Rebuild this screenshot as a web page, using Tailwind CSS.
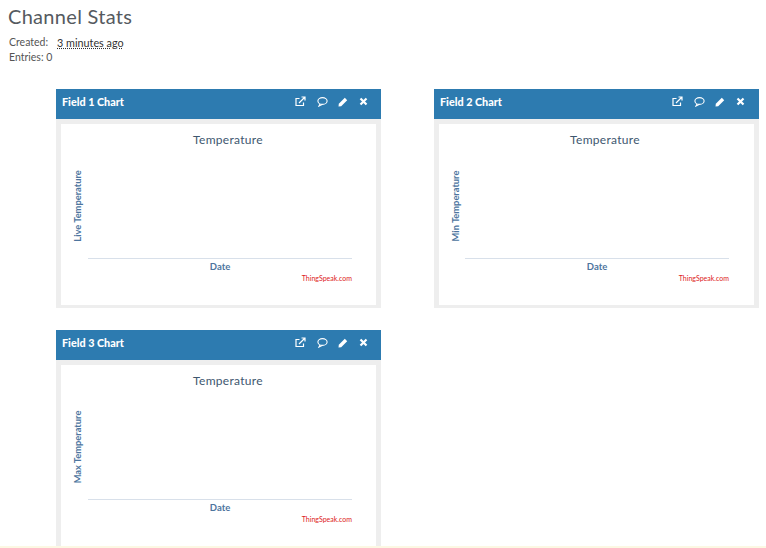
<!DOCTYPE html>
<html lang="en">
<head>
    <meta charset="UTF-8">
    <meta name="viewport" content="width=device-width, initial-scale=1.0">
    <title>Channel Stats</title>
    <script src="https://cdn.jsdelivr.net/npm/@tailwindcss/browser@4"></script>
</head>
<body class="bg-white h-[548px] overflow-hidden relative font-['Lato',sans-serif] text-[#555]">
    <h1 class="pl-[8px] pt-[4px] text-[20px] leading-[24px] tracking-[0.3px] text-[#555a60] font-normal">Channel Stats</h1>

    <div class="pl-[9px] mt-[7px] text-[10.5px] leading-[15px]">
        <div class="flex"><span class="w-[48px]">Created:</span><span class="text-[10.8px] text-[#333] underline decoration-dotted">3 minutes ago</span></div>
        <div>Entries: 0</div>
    </div>

    <div class="grid grid-cols-[325px_325px] gap-x-[53px] gap-y-[22px] ml-[56px] mt-[24px]">

        <!-- Field 1 -->
        <div class="h-[219px] bg-[#eeeeee] flex flex-col">
            <div class="h-[30px] bg-[#2d7bb0] flex items-start justify-between pl-[6px] pr-[13px] pt-[6px] shrink-0">
                <span class="text-white text-[10.8px] leading-[13px] font-black">Field 1 Chart</span>
                <div class="flex items-center gap-[11px] text-white mt-[1px]">
                    <svg width="11" height="11" viewBox="0 0 11 11" fill="none" stroke="currentColor" stroke-width="1.2"><path d="M8.5 6.5V9.5H1V2.5H4.5"/><path d="M4 7L9.5 1.5M6.5 1H10V4.5"/></svg>
                    <svg width="11" height="11" viewBox="0 0 11 11" fill="none" stroke="currentColor" stroke-width="1.1"><ellipse cx="5.5" cy="5" rx="4.6" ry="3.4"/><path d="M3 8L2 10L5 8.4"/></svg>
                    <svg class="ml-[-1px]" width="10" height="10" viewBox="0 0 10 10" fill="currentColor"><path d="M0.5 9.5L0.8 6.8L6.8 0.8L9.2 3.2L3.2 9.2Z"/></svg>
                    <svg width="9" height="9" viewBox="0 0 9 9" stroke="currentColor" stroke-width="2.2"><path d="M1.5 1.5L7.5 7.5M7.5 1.5L1.5 7.5"/></svg>
                </div>
            </div>
            <div class="flex-1 bg-white mx-[5px] mt-[5px] mb-[3px]">
                <svg width="315" height="181" viewBox="0 0 315 181" class="block">
                    <text x="167" y="20" text-anchor="middle" font-size="12" fill="#3e576f" letter-spacing="0.3">Temperature</text>
                    <text x="0" y="0" transform="translate(20 82) rotate(-90)" text-anchor="middle" font-size="9.3" font-weight="700" fill="#4d759e">Live Temperature</text>
                    <line x1="27" y1="134.5" x2="291" y2="134.5" stroke="#d8e0ea"/>
                    <text x="159" y="146" text-anchor="middle" font-size="9.5" font-weight="700" fill="#4d759e">Date</text>
                    <text x="291" y="157" text-anchor="end" font-size="7" fill="#dd2222">ThingSpeak.com</text>
                </svg>
            </div>
        </div>

        <!-- Field 2 -->
        <div class="h-[219px] bg-[#eeeeee] flex flex-col">
            <div class="h-[30px] bg-[#2d7bb0] flex items-start justify-between pl-[6px] pr-[14px] pt-[6px] shrink-0">
                <span class="text-white text-[10.8px] leading-[13px] font-black">Field 2 Chart</span>
                <div class="flex items-center gap-[11px] text-white mt-[1px]">
                    <svg width="11" height="11" viewBox="0 0 11 11" fill="none" stroke="currentColor" stroke-width="1.2"><path d="M8.5 6.5V9.5H1V2.5H4.5"/><path d="M4 7L9.5 1.5M6.5 1H10V4.5"/></svg>
                    <svg width="11" height="11" viewBox="0 0 11 11" fill="none" stroke="currentColor" stroke-width="1.1"><ellipse cx="5.5" cy="5" rx="4.6" ry="3.4"/><path d="M3 8L2 10L5 8.4"/></svg>
                    <svg class="ml-[-1px]" width="10" height="10" viewBox="0 0 10 10" fill="currentColor"><path d="M0.5 9.5L0.8 6.8L6.8 0.8L9.2 3.2L3.2 9.2Z"/></svg>
                    <svg width="9" height="9" viewBox="0 0 9 9" stroke="currentColor" stroke-width="2.2"><path d="M1.5 1.5L7.5 7.5M7.5 1.5L1.5 7.5"/></svg>
                </div>
            </div>
            <div class="flex-1 bg-white mx-[5px] mt-[5px] mb-[3px]">
                <svg width="315" height="181" viewBox="0 0 315 181" class="block">
                    <text x="166" y="20" text-anchor="middle" font-size="12" fill="#3e576f" letter-spacing="0.3">Temperature</text>
                    <text x="0" y="0" transform="translate(20 82) rotate(-90)" text-anchor="middle" font-size="9.3" font-weight="700" fill="#4d759e">Min Temperature</text>
                    <line x1="26" y1="134.5" x2="290" y2="134.5" stroke="#d8e0ea"/>
                    <text x="158" y="146" text-anchor="middle" font-size="9.5" font-weight="700" fill="#4d759e">Date</text>
                    <text x="290" y="157" text-anchor="end" font-size="7" fill="#dd2222">ThingSpeak.com</text>
                </svg>
            </div>
        </div>

        <!-- Field 3 -->
        <div class="h-[219px] bg-[#eeeeee] flex flex-col">
            <div class="h-[30px] bg-[#2d7bb0] flex items-start justify-between pl-[6px] pr-[13px] pt-[6px] shrink-0">
                <span class="text-white text-[10.8px] leading-[13px] font-black">Field 3 Chart</span>
                <div class="flex items-center gap-[11px] text-white mt-[1px]">
                    <svg width="11" height="11" viewBox="0 0 11 11" fill="none" stroke="currentColor" stroke-width="1.2"><path d="M8.5 6.5V9.5H1V2.5H4.5"/><path d="M4 7L9.5 1.5M6.5 1H10V4.5"/></svg>
                    <svg width="11" height="11" viewBox="0 0 11 11" fill="none" stroke="currentColor" stroke-width="1.1"><ellipse cx="5.5" cy="5" rx="4.6" ry="3.4"/><path d="M3 8L2 10L5 8.4"/></svg>
                    <svg class="ml-[-1px]" width="10" height="10" viewBox="0 0 10 10" fill="currentColor"><path d="M0.5 9.5L0.8 6.8L6.8 0.8L9.2 3.2L3.2 9.2Z"/></svg>
                    <svg width="9" height="9" viewBox="0 0 9 9" stroke="currentColor" stroke-width="2.2"><path d="M1.5 1.5L7.5 7.5M7.5 1.5L1.5 7.5"/></svg>
                </div>
            </div>
            <div class="flex-1 bg-white mx-[5px] mt-[5px] mb-[3px]">
                <svg width="315" height="181" viewBox="0 0 315 181" class="block">
                    <text x="167" y="20" text-anchor="middle" font-size="12" fill="#3e576f" letter-spacing="0.3">Temperature</text>
                    <text x="0" y="0" transform="translate(20 82) rotate(-90)" text-anchor="middle" font-size="9.3" font-weight="700" fill="#4d759e">Max Temperature</text>
                    <line x1="27" y1="134.5" x2="291" y2="134.5" stroke="#d8e0ea"/>
                    <text x="159" y="146" text-anchor="middle" font-size="9.5" font-weight="700" fill="#4d759e">Date</text>
                    <text x="291" y="157" text-anchor="end" font-size="7" fill="#dd2222">ThingSpeak.com</text>
                </svg>
            </div>
        </div>
    </div>

    <!-- strip along the bottom edge -->
    <div class="absolute left-0 right-0 bottom-0 h-[2px] bg-[#fcf8e3]"></div>
</body>
</html>
